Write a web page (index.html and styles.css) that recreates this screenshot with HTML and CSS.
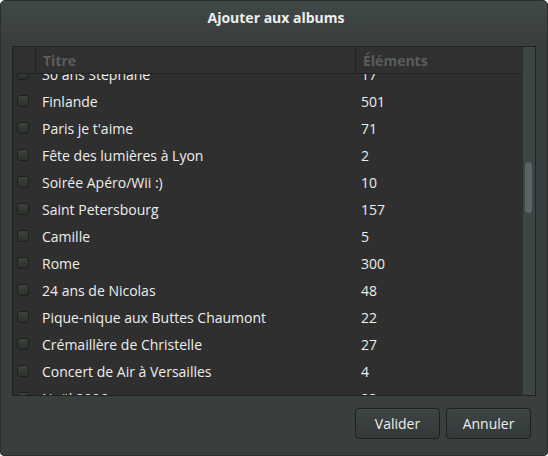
FILE: index.html
```html
<!DOCTYPE html>
<html lang="fr">
<head>
<meta charset="utf-8">
<title>Ajouter aux albums</title>
<link rel="stylesheet" href="styles.css">
</head>
<body>
<div class="window">
  <div class="titlebar">Ajouter aux albums</div>
  <div class="content">
    <div class="listbox">
      <div class="listmain">
        <div class="header">
          <div class="col-check"></div>
          <div class="col-title">Titre</div>
          <div class="col-count">Éléments</div>
        </div>
        <div class="viewport">
          <div class="rows">
            <div class="row"><span class="check"></span><span class="title">30 ans Stéphane</span><span class="count">17</span></div>
            <div class="row"><span class="check"></span><span class="title">Finlande</span><span class="count">501</span></div>
            <div class="row"><span class="check"></span><span class="title">Paris je t'aime</span><span class="count">71</span></div>
            <div class="row"><span class="check"></span><span class="title">Fête des lumières à Lyon</span><span class="count">2</span></div>
            <div class="row"><span class="check"></span><span class="title">Soirée Apéro/Wii :)</span><span class="count">10</span></div>
            <div class="row"><span class="check"></span><span class="title">Saint Petersbourg</span><span class="count">157</span></div>
            <div class="row"><span class="check"></span><span class="title">Camille</span><span class="count">5</span></div>
            <div class="row"><span class="check"></span><span class="title">Rome</span><span class="count">300</span></div>
            <div class="row"><span class="check"></span><span class="title">24 ans de Nicolas</span><span class="count">48</span></div>
            <div class="row"><span class="check"></span><span class="title">Pique-nique aux Buttes Chaumont</span><span class="count">22</span></div>
            <div class="row"><span class="check"></span><span class="title">Crémaillère de Christelle</span><span class="count">27</span></div>
            <div class="row"><span class="check"></span><span class="title">Concert de Air à Versailles</span><span class="count">4</span></div>
            <div class="row"><span class="check"></span><span class="title">Noël 2006</span><span class="count">23</span></div>
          </div>
        </div>
      </div>
      <div class="scrollbar"><div class="slider"></div></div>
    </div>
    <div class="actions">
      <button class="btn">Valider</button>
      <button class="btn">Annuler</button>
    </div>
  </div>
</div>
</body>
</html>
```
FILE: styles.css
```css
html, body {
  margin: 0;
  padding: 0;
  background: #ffffff;
}
body {
  width: 548px;
  height: 456px;
  overflow: hidden;
  font-family: "Open Sans", "DejaVu Sans", sans-serif;
  font-size: 14px;
  color: #eeeeec;
}
.window {
  box-sizing: border-box;
  width: 548px;
  height: 456px;
  background: #393f3f;
  border: 1px solid #2a2e2e;
  border-radius: 5px 5px 4px 4px;
  display: flex;
  flex-direction: column;
  overflow: hidden;
}
.titlebar {
  height: 33px;
  flex: none;
  display: flex;
  align-items: center;
  justify-content: center;
  font-weight: bold;
  font-size: 14px;
  color: #eeeeec;
  padding-bottom: 1px;
  padding-left: 4px;
  box-sizing: border-box;
  background: linear-gradient(#414848, #3a4040);
}
.content {
  flex: 1;
  display: flex;
  flex-direction: column;
  padding: 12px 11px 0 11px;
}
.listbox {
  height: 350px;
  box-sizing: border-box;
  border: 1px solid #1f2323;
  background: #2f2f2f;
  display: flex;
}
.listmain {
  flex: 1;
  display: flex;
  flex-direction: column;
  min-width: 0;
}
.header {
  height: 27px;
  flex: none;
  box-sizing: border-box;
  border-bottom: 1px solid #222424;
  display: flex;
  background: #303030;
  color: #5a5d5d;
  font-weight: bold;
}
.header > div {
  display: flex;
  align-items: center;
}
.col-check {
  width: 22px;
  border-right: 1px solid #232525;
}
.col-title {
  width: 312px;
  padding-left: 7px;
  border-right: 1px solid #232525;
}
.col-count {
  flex: 1;
  padding-left: 7px;
}
.viewport {
  flex: 1;
  overflow: hidden;
}
.rows {
  margin-top: -13px;
}
.row {
  height: 27px;
  display: flex;
  align-items: center;
}
.check {
  width: 10px;
  height: 10px;
  margin-left: 4px;
  margin-right: 13px;
  margin-top: -2px;
  border: 1px solid #1d201d;
  border-radius: 3px;
  background: linear-gradient(#3c443b, #2b302b);
  flex: none;
}
.title {
  width: 319px;
  flex: none;
  white-space: nowrap;
}
.count {
  flex: 1;
}
.scrollbar {
  width: 13px;
  flex: none;
  background: #3d4545;
  border-left: 1px solid #2a2f2f;
  box-sizing: border-box;
  padding-left: 2px;
}
.slider {
  width: 7px;
  height: 51px;
  margin-top: 115px;
  border-radius: 4px;
  background: #5b6464;
}
.actions {
  display: flex;
  justify-content: flex-end;
  gap: 6px;
  padding-top: 12px;
  padding-right: 5px;
}
.btn {
  width: 85px;
  height: 31px;
  font-family: inherit;
  font-size: 14px;
  color: #eeeeec;
  border: 1px solid #1c2020;
  border-radius: 4px;
  background: linear-gradient(#3d4444, #343a3a);
  box-shadow: inset 0 1px 0 rgba(255,255,255,0.05);
  padding: 0;
  padding-bottom: 1px;
}
```
